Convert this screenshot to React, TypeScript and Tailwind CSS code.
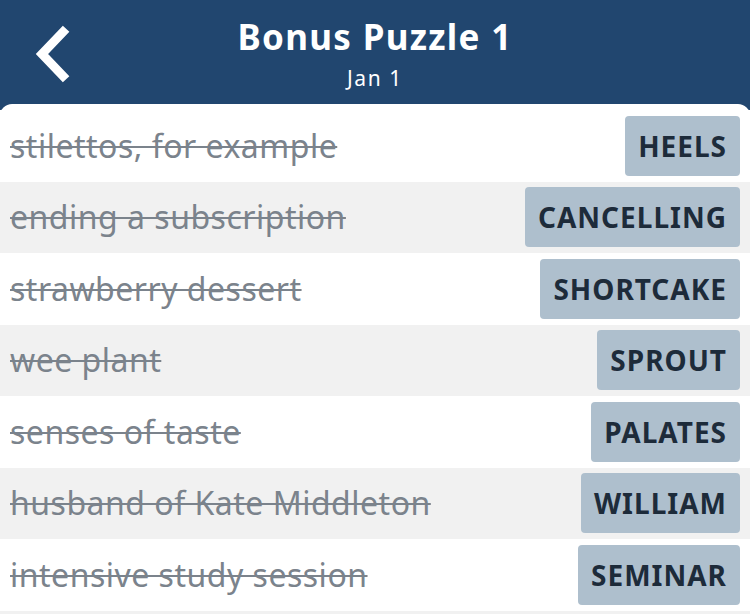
import React from "react";

const rows: { clue: string; answer: string }[] = [
  { clue: "stilettos, for example", answer: "HEELS" },
  { clue: "ending a subscription", answer: "CANCELLING" },
  { clue: "strawberry dessert", answer: "SHORTCAKE" },
  { clue: "wee plant", answer: "SPROUT" },
  { clue: "senses of taste", answer: "PALATES" },
  { clue: "husband of Kate Middleton", answer: "WILLIAM" },
  { clue: "intensive study session", answer: "SEMINAR" },
];

export default function App() {
  return (
    <div
      className="w-[750px] h-[614px] overflow-hidden bg-[#21466f] flex flex-col"
      style={{ fontFamily: "'Noto Sans', 'Open Sans', sans-serif" }}
    >
      <div className="h-[104px] relative flex flex-col items-center shrink-0">
        <svg
          className="absolute left-[30px] top-[24px]"
          width="44"
          height="60"
          viewBox="0 0 44 60"
        >
          <path
            d="M33 8 L12 30 L33 52"
            fill="none"
            stroke="white"
            strokeWidth="9"
            strokeLinecap="square"
            strokeLinejoin="miter"
          />
        </svg>
        <div className="text-white font-bold text-[35px] leading-none mt-[19px] tracking-[1.3px]">
          Bonus Puzzle 1
        </div>
        <div className="text-white text-[21px] leading-none mt-[14px] tracking-[1.6px]">Jan 1</div>
      </div>
      <div className="flex-1 bg-white rounded-t-[12px] pt-[6px] flex flex-col">
        {rows.map((r, i) => (
          <div
            key={i}
            className={`h-[71.5px] shrink-0 flex items-center justify-between pl-[10px] pr-[10px] ${
              i % 2 === 1 ? "bg-[#f1f1f1]" : "bg-white"
            }`}
          >
            <span className="text-[32px] text-[#7b838c] line-through decoration-[2px] tracking-[0.5px]">
              {r.clue}
            </span>
            <span className="h-[60px] flex items-center px-[13px] bg-[#aebfcd] rounded-[4px] text-[28px] font-bold text-[#1d2b3a] tracking-[1px]">
              {r.answer}
            </span>
          </div>
        ))}
        <div className="flex-1 bg-[#f1f1f1]" />
      </div>
    </div>
  );
}
